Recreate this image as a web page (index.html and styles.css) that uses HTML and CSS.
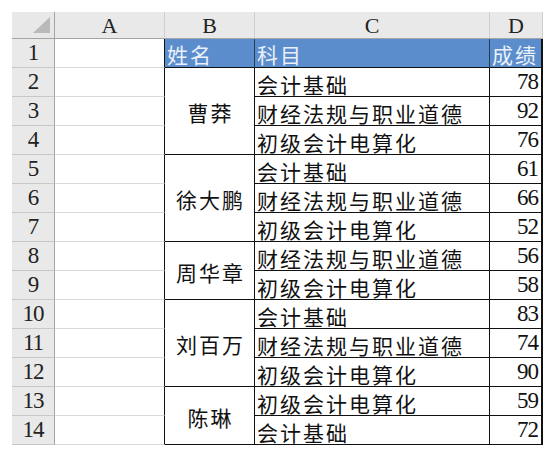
FILE: index.html
```html
<!DOCTYPE html>
<html lang="zh-CN">
<head>
<meta charset="utf-8">
<title>成绩表</title>
<link rel="stylesheet" href="styles.css">
</head>
<body>
<div class="sheet">
  <div class="corner"><svg class="tri" width="17" height="16" viewBox="0 0 17 16"><polygon points="17,0 17,16 0,16" fill="#b9b9b9"/></svg></div>
  <div class="ch">A</div>
  <div class="ch">B</div>
  <div class="ch">C</div>
  <div class="ch">D</div>

  <div class="rh">1</div><div class="ca"></div>
  <div class="hd hb">姓名</div><div class="hd">科目</div><div class="hd hdd">成绩</div>

  <div class="rh">2</div><div class="ca"></div>
  <div class="nm s3">曹莽</div><div class="sb">会计基础</div><div class="sc">78</div>
  <div class="rh">3</div><div class="ca"></div>
  <div class="sb">财经法规与职业道德</div><div class="sc">92</div>
  <div class="rh">4</div><div class="ca"></div>
  <div class="sb">初级会计电算化</div><div class="sc">76</div>

  <div class="rh">5</div><div class="ca"></div>
  <div class="nm s3">徐大鹏</div><div class="sb">会计基础</div><div class="sc">61</div>
  <div class="rh">6</div><div class="ca"></div>
  <div class="sb">财经法规与职业道德</div><div class="sc">66</div>
  <div class="rh">7</div><div class="ca"></div>
  <div class="sb">初级会计电算化</div><div class="sc">52</div>

  <div class="rh">8</div><div class="ca"></div>
  <div class="nm s2">周华章</div><div class="sb">财经法规与职业道德</div><div class="sc">56</div>
  <div class="rh">9</div><div class="ca"></div>
  <div class="sb">初级会计电算化</div><div class="sc">58</div>

  <div class="rh">10</div><div class="ca"></div>
  <div class="nm s3">刘百万</div><div class="sb">会计基础</div><div class="sc">83</div>
  <div class="rh">11</div><div class="ca"></div>
  <div class="sb">财经法规与职业道德</div><div class="sc">74</div>
  <div class="rh">12</div><div class="ca"></div>
  <div class="sb">初级会计电算化</div><div class="sc">90</div>

  <div class="rh">13</div><div class="ca"></div>
  <div class="nm s2">陈琳</div><div class="sb">初级会计电算化</div><div class="sc">59</div>
  <div class="rh">14</div><div class="ca"></div>
  <div class="sb">会计基础</div><div class="sc">72</div>
</div>
</body>
</html>
```
FILE: styles.css
```css
* { box-sizing: border-box; }
html, body { margin: 0; padding: 0; background: #fff; }
body { padding: 12px 0 0 12px; }

.sheet {
  display: grid;
  grid-template-columns: 43px 110px 90px 235px 53px;
  grid-template-rows: 27px repeat(14, 29px);
  width: 531px;
  font-family: "Liberation Serif", serif;
  font-size: 21px;
  color: #111;
}

.corner {
  background: #e8e8e8;
  border-right: 1px solid #a4a4a4;
  border-bottom: 1px solid #a4a4a4;
  display: flex;
  align-items: flex-end;
  justify-content: flex-end;
  padding: 0 4px 5px 0;
}
.tri { display: block; }

.ch {
  background: #e9e9e9;
  border-right: 1px solid #cfcfcf;
  border-bottom: 1px solid #a4a4a4;
  display: flex;
  align-items: center;
  justify-content: center;
  color: #222;
  line-height: 1;
  padding-top: 2px;
  font-size: 22px;
}

.rh {
  background: #e9e9e9;
  border-right: 1px solid #a4a4a4;
  border-bottom: 1px solid #c8c8c8;
  display: flex;
  align-items: flex-end;
  justify-content: center;
  color: #222;
  line-height: 1;
  padding-bottom: 3px;
  font-size: 23px;
  letter-spacing: -1px;
}

.ca {
  border-right: 1px solid #111;
  border-bottom: 1px solid #d8d8d8;
}

.hd {
  background: #5b8dcd;
  color: #eaf0f9;
  font-family: "Noto Sans CJK SC", sans-serif;
  letter-spacing: 2px;
  border-right: 1px solid #2a3a55;
  border-bottom: 1px solid #111;
  display: flex;
  align-items: flex-end;
  padding: 0 0 1px 2px;
  line-height: 24px;
  white-space: nowrap;
}
.hdd { border-right: 2px solid #111; padding-left: 2px; }

.nm {
  font-family: "Noto Sans CJK SC", sans-serif;
  letter-spacing: 2px;
  border-right: 1px solid #111;
  border-bottom: 1px solid #111;
  display: flex;
  align-items: center;
  justify-content: center;
  padding: 2px 0 0 2px;
  line-height: 24px;
}
.s3 { grid-row: span 3; }
.s2 { grid-row: span 2; }

.sb {
  font-family: "Noto Sans CJK SC", sans-serif;
  letter-spacing: 2px;
  border-right: 1px solid #111;
  border-bottom: 1px solid #111;
  display: flex;
  align-items: flex-end;
  padding: 0 0 0 2px;
  line-height: 24px;
  white-space: nowrap;
}

.sc {
  border-right: 2px solid #111;
  border-bottom: 1px solid #111;
  display: flex;
  align-items: flex-end;
  justify-content: flex-end;
  padding: 0 3px 3px 0;
  line-height: 1;
  font-size: 23px;
  letter-spacing: -1px;
}
```
